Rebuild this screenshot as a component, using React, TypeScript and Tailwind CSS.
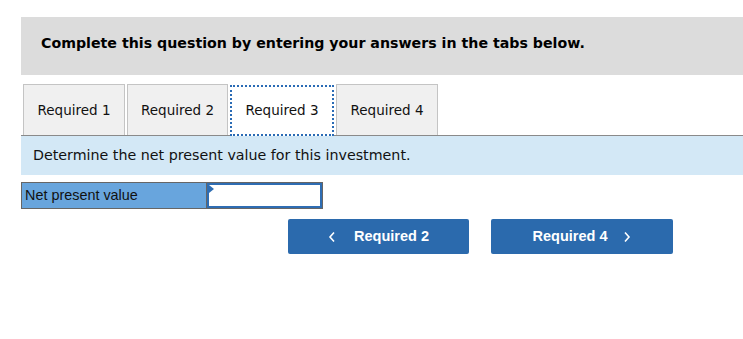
import React from 'react';

const tabs = ['Required 1', 'Required 2', 'Required 3', 'Required 4'];

export default function App() {
  const active = 2;

  return (
    <div className="min-h-[339px] w-[743px] bg-white pt-[17px] pl-[21px]">
      {/* Instructions header */}
      <div className="h-[58px] bg-[#dcdcdc] pl-[20px] pb-[4px] flex items-center">
        <p className="font-['Verdana','DejaVu_Sans',sans-serif] text-[14.2px] font-bold text-black">
          Complete this question by entering your answers in the tabs below.
        </p>
      </div>

      {/* Tabs */}
      <div className="mt-[9px] flex items-end gap-[2px] pl-[2px] border-b border-[#8a8a8a]">
        {tabs.map((tab, i) => (
          <div
            key={tab}
            className={`h-[51px] flex items-center justify-center font-['Verdana','DejaVu_Sans',sans-serif] text-[13.5px] text-[#111] ${
              i === active
                ? 'w-[104px] bg-white border-2 border-dotted border-[#2a6bb5] -mb-px pb-px'
                : `${i === 0 || i === 3 ? 'w-[102px]' : 'w-[101px]'} bg-[#f0f0f0] border border-b-0 border-[#c4c4c4]`
            }`}
          >
            {tab}
          </div>
        ))}
      </div>

      {/* Question */}
      <div className="h-[39px] bg-[#d3e8f6] pl-[12px] flex items-center">
        <p className="font-['Verdana','DejaVu_Sans',sans-serif] text-[14.25px] text-[#111]">
          Determine the net present value for this investment.
        </p>
      </div>

      {/* Answer table */}
      <div className="mt-[7px] flex w-[302px] h-[27px] border border-[#666]">
        <div className="w-[185px] bg-[#68a5dd] border-r border-[#666] pl-[3px] flex items-center font-['Arial','Liberation_Sans',sans-serif] text-[14.4px] text-[#111]">
          Net present value
        </div>
        <div className="relative flex-1 bg-white border-2 border-[#2e6db3]">
          <span className="absolute left-0 top-0 w-0 h-0 border-y-[4px] border-y-transparent border-l-[5px] border-l-[#2e6db3]" />
        </div>
      </div>

      {/* Navigation */}
      <div className="mt-[10px] flex gap-[22px] pl-[267px]">
        <button className="w-[181px] h-[35px] rounded-[2px] bg-[#2b6aad] flex items-center justify-center gap-[18px] text-white font-['Arial','Liberation_Sans',sans-serif] text-[14.5px] font-bold">
          <svg width="8" height="12" viewBox="0 0 8 12" fill="none">
            <path d="M6 1.5L2 6l4 4.5" stroke="white" strokeWidth="1.6" />
          </svg>
          <span>Required 2</span>
        </button>
        <button className="w-[182px] h-[35px] rounded-[2px] bg-[#2b6aad] flex items-center justify-center gap-[16px] text-white font-['Arial','Liberation_Sans',sans-serif] text-[14.5px] font-bold">
          <span>Required 4</span>
          <svg width="8" height="12" viewBox="0 0 8 12" fill="none">
            <path d="M2 1.5L6 6l-4 4.5" stroke="white" strokeWidth="1.6" />
          </svg>
        </button>
      </div>
    </div>
  );
}
